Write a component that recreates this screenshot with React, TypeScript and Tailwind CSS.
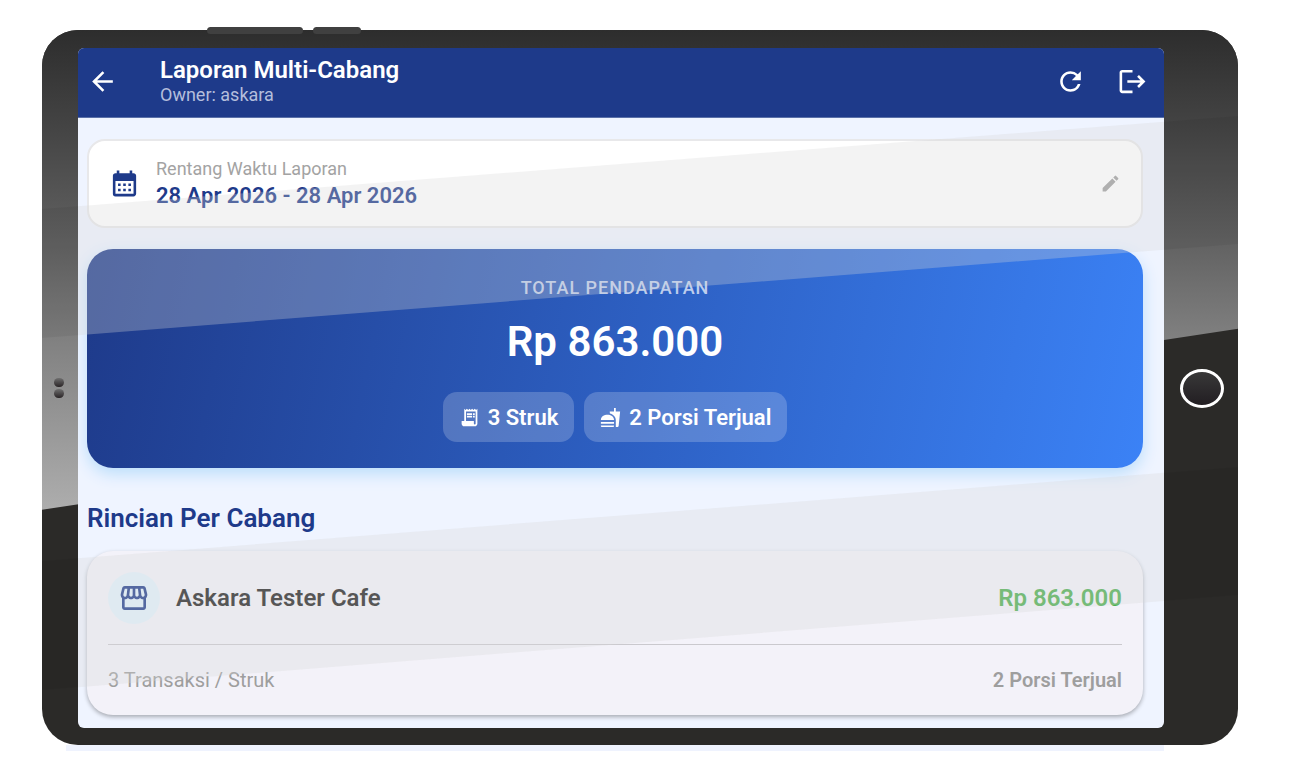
import React from 'react';
import {
    MdArrowBack,
    MdCalendarMonth,
    MdEdit,
    MdFastfood,
    MdLogout,
    MdOutlineStorefront,
    MdReceiptLong,
    MdRefresh,
} from 'react-icons/md';

interface Branch {
    name: string;
    revenue: string;
    receipts: number;
    portions: number;
}

const branches: Branch[] = [
    { name: 'Askara Tester Cafe', revenue: 'Rp 863.000', receipts: 3, portions: 2 },
];

// Two diagonal reflections that run across the whole device
const Glare: React.FC<{ className: string }> = ({ className }) => (
    <svg viewBox="0 0 1196 715" preserveAspectRatio="none" aria-hidden="true" className={className}>
        <path d="M0 179L1196 86V214L0 308Z" fill="currentColor" />
        <path d="M0 531L1196 437V565L0 660Z" fill="currentColor" />
    </svg>
);

const Header: React.FC = () => (
    <header className="flex h-[70px] items-center border-b border-[#5a70a8] bg-[#1e3a8a] pb-[2px] pl-[9px] pr-4 text-white">
        <button type="button" aria-label="Kembali" className="mr-[42px]">
            <MdArrowBack size={31} />
        </button>
        <div className="flex-1">
            <h1 className="text-2xl font-semibold leading-[26px]">Laporan Multi-Cabang</h1>
            <p className="text-[18px] leading-6 text-[#b4bedc]">Owner: askara</p>
        </div>
        <div className="flex gap-[31px]">
            <button type="button" aria-label="Muat ulang">
                <MdRefresh size={31} />
            </button>
            <button type="button" aria-label="Keluar">
                <MdLogout size={31} />
            </button>
        </div>
    </header>
);

const DateRange: React.FC = () => (
    <button
        type="button"
        className="flex h-[89px] w-full items-center rounded-[18px] border-2 border-[#e8e8ea] bg-white px-5 text-left"
    >
        <MdCalendarMonth size={31} className="text-[#1e3a8a]" />
        <span className="ml-4 flex-1 pb-[2px]">
            <span className="block text-[18px] leading-[26px] text-[#a3a3a3]">Rentang Waktu Laporan</span>
            <span className="block text-[22px] font-semibold leading-7 text-[#1e3a8a]">28 Apr 2026 - 28 Apr 2026</span>
        </span>
        <MdEdit size={21} className="text-[#9e9e9e]" />
    </button>
);

const Chip: React.FC<{ icon: React.ReactNode; label: string }> = ({ icon, label }) => (
    <div className="flex h-[50px] items-center gap-2 rounded-[14px] bg-white/20 px-4 text-[22px] font-semibold">
        {icon}
        {label}
    </div>
);

const TotalCard: React.FC = () => (
    <section className="flex flex-col items-center rounded-[26px] bg-[linear-gradient(102deg,#1e3a8a,#3b82f6)] py-[26px] text-white shadow-[0_6px_16px_#bbdefb]">
        <h2 className="text-[18px] font-medium leading-[26px] tracking-[1px] text-white/70">TOTAL PENDAPATAN</h2>
        <p className="mt-[14px] text-[42px] font-semibold leading-[54px]">Rp 863.000</p>
        <div className="mt-[23px] flex gap-[10px]">
            <Chip icon={<MdReceiptLong size={21} />} label="3 Struk" />
            <Chip icon={<MdFastfood size={21} />} label="2 Porsi Terjual" />
        </div>
    </section>
);

const BranchCard: React.FC<{ branch: Branch }> = ({ branch }) => (
    <article className="rounded-[26px] bg-[#f3f2f9] p-[21px] shadow-[0_2px_4px_rgba(0,0,0,0.3)]">
        <div className="flex items-center">
            <div className="flex size-[52px] items-center justify-center rounded-full bg-[#e3f2fd] text-[#1e3a8a]">
                <MdOutlineStorefront size={32} />
            </div>
            <h3 className="ml-4 flex-1 text-2xl font-semibold text-[#1f1f1f]">{branch.name}</h3>
            <span className="text-2xl font-semibold text-[#4caf50]">{branch.revenue}</span>
        </div>
        <hr className="mt-5 border-[#cac9ce]" />
        <div className="mt-[21px] flex justify-between text-xl leading-7 text-[#9e9e9e]">
            <span>{branch.receipts} Transaksi / Struk</span>
            <span className="font-semibold">{branch.portions} Porsi Terjual</span>
        </div>
    </article>
);

const App: React.FC = () => {
    return (
        <div className="min-h-screen bg-white pl-[42px] pr-[58px] pt-[30px] font-['Roboto',sans-serif]">
            <div className="relative flex items-center rounded-[36px] bg-[#2b2a28] pb-[17px] pt-[18px]">
                <div className="absolute inset-0 rounded-[36px] bg-[linear-gradient(#2d2d2d,#434343_13%,#606060_29%,#828282_44%,#adadad_67%)] [clip-path:polygon(0_0,100%_0,100%_41.8%,0_67.1%)]" />
                <Glare className="absolute inset-0 size-full text-black/5" />
                <div className="absolute -top-[3px] left-[165px] flex gap-[10px]">
                    <div className="h-[7px] w-24 rounded-full bg-[#404040]" />
                    <div className="h-[7px] w-12 rounded-full bg-[#404040]" />
                </div>

                <div className="relative flex w-9 shrink-0 flex-col items-center gap-[2px] pr-[2px]">
                    <div className="h-[9px] w-[10px] rounded-full bg-linear-to-b from-[#707070] to-[#2a2527]" />
                    <div className="h-[9px] w-[10px] rounded-full bg-linear-to-b from-[#707070] to-[#2a2527]" />
                </div>

                <main className="relative min-w-0 flex-1 overflow-hidden rounded-md bg-[#eff4ff]">
                    <Header />
                    <div className="pb-[13px] pl-[9px] pr-[21px] pt-[21px]">
                        <DateRange />
                        <div className="mt-[21px]">
                            <TotalCard />
                        </div>
                        <h2 className="mb-4 mt-[33px] text-[26px] font-semibold leading-[34px] text-[#1e3a8a]">
                            Rincian Per Cabang
                        </h2>
                        {branches.map((branch) => (
                            <BranchCard key={branch.name} branch={branch} />
                        ))}
                    </div>
                    <div className="pointer-events-none absolute -bottom-[17px] -left-9 -right-[74px] -top-[18px]">
                        <Glare className="size-full text-[#d6d6d6]/30" />
                    </div>
                </main>

                <div className="relative flex w-[74px] shrink-0 justify-center pl-[2px]">
                    <button
                        type="button"
                        aria-label="Home"
                        className="h-[39px] w-11 rounded-[50%] border-3 border-white bg-linear-to-b from-[#3b3b3b] to-[#201c20] bg-origin-border"
                    />
                </div>
            </div>
            <div className="ml-6 mr-[74px] h-[6px] bg-[#eff3fe]" />
        </div>
    );
};

export default App;
